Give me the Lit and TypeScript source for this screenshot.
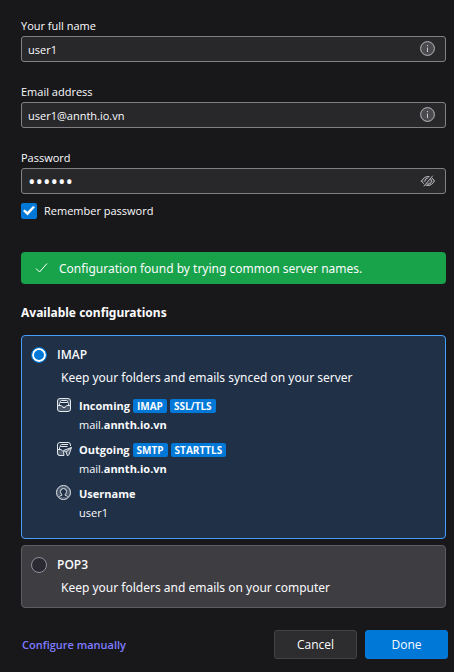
import { LitElement, html, css, svg } from "lit";
import { customElement, state } from "lit/decorators.js";
import { classMap } from "lit/directives/class-map.js";

const infoIcon = html`<svg viewBox="0 0 16 16" width="16" height="16" aria-hidden="true">
  <circle cx="7.500" cy="7.500" r="6.900" fill="#4a4a4f" stroke="#b9b9bd" />
  <path d="M7.500 6.500V11M7.500 4v1.200" stroke="#c9c9cd" fill="none" />
</svg>`;

const hiddenIcon = html`<svg viewBox="0 0 16 16" width="16" height="16" aria-hidden="true">
  <g fill="none" stroke="#b4b4b8" stroke-linecap="round">
    <path d="M1.500 8C3 5 5.500 3.500 8 3.500s5 1.500 6.500 4.500C13 11 10.500 12.500 8 12.500S3 11 1.500 8z" fill="#454549" />
    <path d="M10.800 6a3.200 3.200 0 0 1-5 4M5 8.700a3 3 0 0 1 3.500-3.700" />
    <path d="M3 13 12 2.500" stroke="#28282a" stroke-width="2" />
    <path d="M4 13 12.500 3" />
  </g>
</svg>`;

const checkIcon = html`<svg viewBox="0 0 16 16" width="16" height="16" aria-hidden="true">
  <path d="M3 7.500 6.500 11 14 2.500" fill="none" stroke="#fff" />
</svg>`;

const tray = svg`
  <rect x="1.500" y="1.500" width="13" height="13" rx="2.500" fill="#4b5a6c" />
  <path d="M4.500 5.500v-1a1 1 0 0 1 1-1h5a1 1 0 0 1 1 1v1M3.500 8.500v-2a1 1 0 0 1 1-1h7a1 1 0 0 1 1 1v2" fill="#203147" />
  <path d="M1.500 8.500h3.500c.5 0 .7.400 1 1 .4.700 1 1 2 1s1.600-.300 2-1c.3-.600.500-1 1-1h3.500" />`;

const incomingIcon = html`<svg class="line" viewBox="0 0 16 16" width="16" height="16" aria-hidden="true">${tray}</svg>`;

const outgoingIcon = html`<svg class="line" viewBox="0 0 16 16" width="16" height="16" aria-hidden="true">
  <path d="M8 14.500H4A2.500 2.500 0 0 1 1.500 12V4A2.500 2.500 0 0 1 4 1.500h8A2.500 2.500 0 0 1 14.500 4v1" />
  <path d="M1.500 8.500H5c1 0 1 2 2.500 2l.5 4H4A2.500 2.500 0 0 1 1.500 12z" fill="#4b5a6c" />
  <path d="M12 3.500H5.500a1 1 0 0 0-1 1v1M11.500 5.500h-7a1 1 0 0 0-1 1v2" />
  <path d="M15.500 6.500 7.500 9.500l2.500 1.500 1.500 4 1.500-1.500zM15.500 6.500 10 11" fill="#4b5a6c" />
</svg>`;

const userIcon = html`<svg class="line" viewBox="0 0 16 16" width="16" height="16" aria-hidden="true">
  <circle cx="7.500" cy="7.500" r="7" fill="#4b5a6c" />
  <path d="M3.500 12c.3-1 1-1.500 2.500-1.800v-.700C5 8.800 4.500 7.800 4.500 6.500a3 3 0 0 1 6 0c0 1.300-.5 2.300-1.500 3v.7c1.500.300 2.200.800 2.500 1.800" fill="#203147" />
</svg>`;

@customElement("app-root")
export class AppRoot extends LitElement {
  @state() private protocol = "imap";

  static styles = css`
    :host {
      display: block;
      box-sizing: border-box;
      min-height: 100vh;
      padding: 18px 6px 13px 21px;
      background: #18181a;
      color: #fbfbfe;
      font: 11px/16px "Open Sans", "Noto Sans", sans-serif;
    }
    * { box-sizing: border-box; }
    button, input { font: inherit; color: inherit; margin: 0; }
    svg { display: block; flex: none; }
    .main { margin-right: 2px; }
    .fields { display: flex; flex-direction: column; gap: 22px; }
    .field { display: flex; flex-direction: column; gap: 2px; }
    .box {
      display: flex;
      align-items: center;
      height: 26px;
      padding: 0 9px 0 6px;
      border: 1px solid #818183;
      border-radius: 3px;
      background: #28282a;
    }
    .box input {
      flex: 1;
      min-width: 0;
      padding: 1px 0 0;
      border: 0;
      outline: 0;
      background: none;
    }
    .box .secret { font-size: 20px; }
    .reveal { padding: 0; border: 0; background: none; }
    .remember { display: flex; align-items: center; gap: 7px; margin-top: 9px; }
    .remember input {
      appearance: none;
      width: 16px;
      height: 16px;
      border-radius: 2px;
      background: #0078d7;
      display: grid;
      place-items: center;
    }
    .remember input:checked::before {
      content: "";
      width: 12px;
      height: 10px;
      background: #fff;
      clip-path: polygon(0 50%, 14% 34%, 36% 58%, 84% 0, 100% 12%, 38% 96%);
    }
    .banner, h2, .about { font-family: "Noto Sans", sans-serif; font-size: 12px; }
    .banner {
      display: flex;
      align-items: center;
      gap: 10px;
      min-height: 32px;
      margin-top: 33px;
      padding: 2px 12px 0;
      border-radius: 4px;
      background: #18a34a;
    }
    h2 { margin: 20px 0 14px; line-height: 17px; font-weight: 700; }
    .options { display: flex; flex-direction: column; gap: 6px; }
    .option {
      padding: 11px 9px;
      border: 1px solid #5c5c61;
      border-radius: 4px;
      background: #3e3d42;
    }
    .selected { padding-bottom: 15px; border-color: #459fff; background: #203147; }
    .title { display: flex; align-items: center; gap: 10px; font-size: 12px; font-weight: 600; }
    .title input {
      appearance: none;
      width: 16px;
      height: 16px;
      border: 1px solid #8f8f9d;
      border-radius: 50%;
      background: #2b2a33;
    }
    .title input:checked {
      border: 1px solid #0078d7;
      background: #0078d7;
      box-shadow: inset 0 0 0 2px #fff;
    }
    .about { margin: 6px 0 0 30px; line-height: 17px; }
    .servers { display: flex; flex-direction: column; gap: 6px; margin: 11px 0 0 25px; }
    .server { display: grid; grid-template-columns: 16px 1fr; column-gap: 7px; }
    .name { display: flex; align-items: center; gap: 3px; height: 18px; font-weight: 700; }
    .host { grid-column: 2; height: 20px; line-height: 20px; margin: 0; }
    .tag {
      padding: 0 4px;
      border-radius: 2px;
      background: #0078d7;
      font-size: 10px;
      line-height: 14px;
    }
    .line { fill: none; stroke: #e4e7eb; stroke-linejoin: round; }
    .footer { display: flex; align-items: center; gap: 8px; margin-top: 22px; padding-left: 1px; }
    .footer a { margin-right: auto; color: #7f7cff; font-weight: 600; text-decoration: none; }
    .footer button {
      width: 83px;
      height: 29px;
      padding: 0;
      border: 1px solid #434346;
      border-radius: 3px;
      background: #2d2d2f;
      font-size: 12px;
    }
    .footer .done { border-color: #0078d7; background: #0078d7; }
  `;

  private server(icon: unknown, name: string, tags: string[], host: unknown) {
    return html`<div class="server">
      ${icon}
      <div class="name"><span>${name}</span>${tags.map((t) => html`<span class="tag">${t}</span>`)}</div>
      <p class="host">${host}</p>
    </div>`;
  }

  private option(id: string, title: string, about: string, details: unknown = null) {
    const selected = this.protocol === id;
    return html`<section class=${classMap({ option: true, selected })}>
      <label class="title">
        <input type="radio" name="protocol" .checked=${selected} @change=${() => (this.protocol = id)} />${title}
      </label>
      <p class="about">${about}</p>
      ${selected ? details : null}
    </section>`;
  }

  render() {
    const host = html`mail.<b>annth.io.vn</b>`;
    return html`
      <div class="main">
        <div class="fields">
          <div class="field">
            <label for="name">Your full name</label>
            <div class="box"><input id="name" type="text" value="user1" />${infoIcon}</div>
          </div>
          <div class="field">
            <label for="email">Email address</label>
            <div class="box"><input id="email" type="email" value="user1@annth.io.vn" />${infoIcon}</div>
          </div>
          <div class="field">
            <label for="password">Password</label>
            <div class="box">
              <input id="password" class="secret" type="password" value="secret" />
              <button class="reveal" aria-label="Show password">${hiddenIcon}</button>
            </div>
          </div>
        </div>
        <label class="remember"><input type="checkbox" checked />Remember password</label>
        <div class="banner" role="status">${checkIcon}<span>Configuration found by trying common server names.</span></div>
        <h2>Available configurations</h2>
        <div class="options">
          ${this.option("imap", "IMAP", "Keep your folders and emails synced on your server", html`<div class="servers">
            ${this.server(incomingIcon, "Incoming", ["IMAP", "SSL/TLS"], host)}
            ${this.server(outgoingIcon, "Outgoing", ["SMTP", "STARTTLS"], host)}
            ${this.server(userIcon, "Username", [], "user1")}
          </div>`)}
          ${this.option("pop3", "POP3", "Keep your folders and emails on your computer")}
        </div>
      </div>
      <div class="footer">
        <a href="#manual">Configure manually</a>
        <button>Cancel</button>
        <button class="done">Done</button>
      </div>
    `;
  }
}
